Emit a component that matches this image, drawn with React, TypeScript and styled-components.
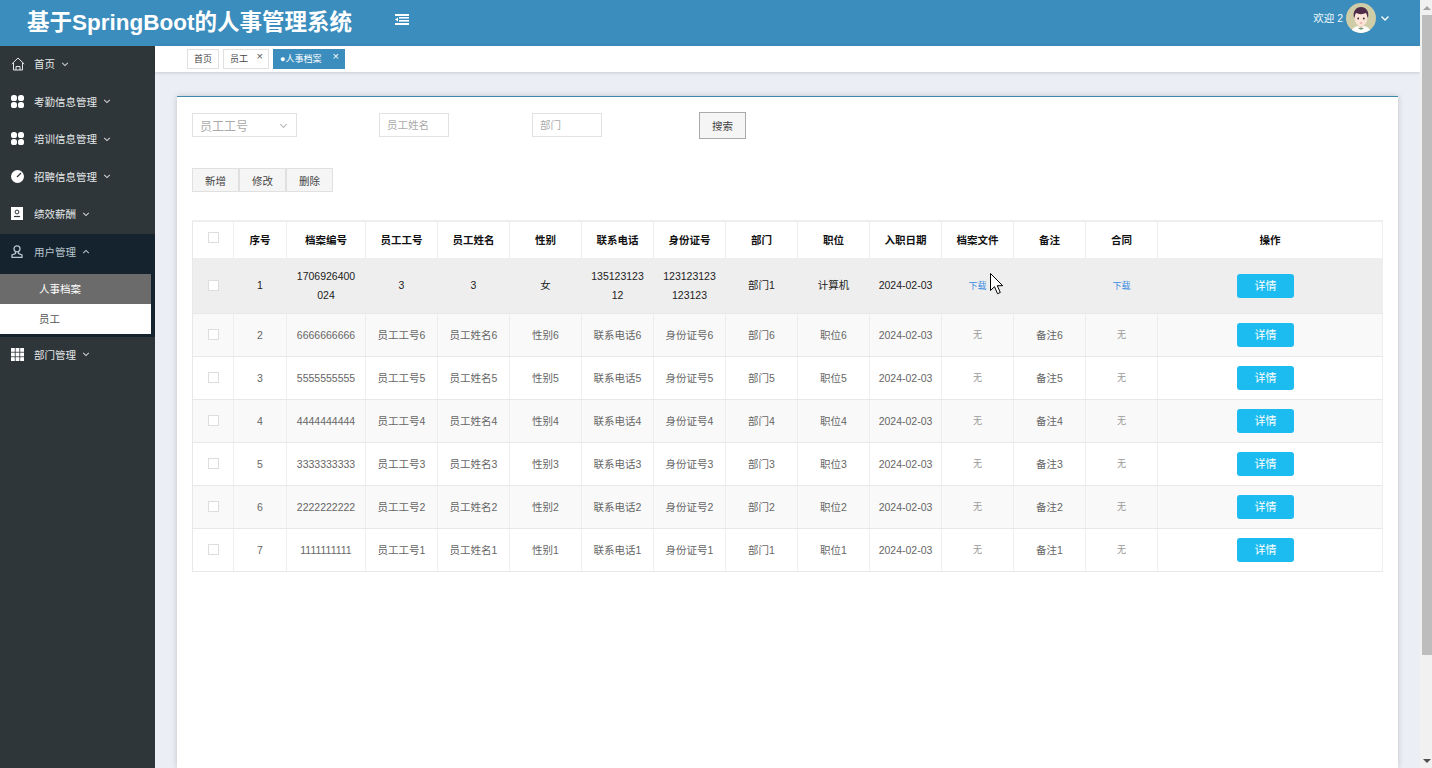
import React from "react";
import styled, { createGlobalStyle } from "styled-components";

const Global = createGlobalStyle`
  html, body { margin: 0; padding: 0; height: 100%; overflow: hidden; background: #fff; }
  body { font-family: "Liberation Sans", "Noto Sans CJK SC", sans-serif; font-size: 10.5px; color: #333; }
  #root { height: 100%; }
  * { box-sizing: border-box; }
`;

const Page = styled.div`
  position: relative;
  display: flex;
  width: 1432px;
  height: 768px;
  overflow: hidden;
`;
const Main = styled.div`
  width: 1420px;
  height: 768px;
  display: flex;
  flex-direction: column;
`;
const Scrollbar = styled.div`
  width: 12px;
  height: 768px;
  background: #f1f1f1;
  display: flex;
  flex-direction: column;
  align-items: flex-end;
`;
const ScrollArrow = styled.div<{ $down?: boolean }>`
  width: 11px;
  height: 15px;
  flex: none;
  display: flex;
  align-items: center;
  justify-content: center;
  &::before {
    content: "";
    border-left: 4px solid transparent;
    border-right: 4px solid transparent;
    ${(p) => (p.$down ? "border-top: 4px solid #505050;" : "border-bottom: 4px solid #a3a3a3;")}
  }
`;
const ScrollThumb = styled.div`
  width: 10px;
  height: 640px;
  flex: none;
  background: #bdbdbd;
`;
const ScrollRest = styled.div`
  flex: 1;
`;

const Header = styled.header`
  height: 46px;
  flex: none;
  background: #3b8dbd;
  display: flex;
  align-items: flex-start;
  color: #fff;
`;
const Title = styled.h1`
  margin: 0 0 0 27px;
  width: 368px;
  font-size: 22.5px;
  line-height: 46px;
  font-weight: 700;
  color: #fff;
  white-space: nowrap;
`;
const MenuToggle = styled.div`
  margin-top: 14px;
  display: flex;
`;
const UserBox = styled.div`
  margin-left: auto;
  margin-right: 30px;
  margin-top: 3px;
  display: flex;
  align-items: center;
  font-size: 10.5px;
`;
const Welcome = styled.span`
  margin-right: 3px;
  padding-bottom: 2px;
  color: #f2fbff;
`;
const CaretRight = styled.span`
  display: flex;
  margin-left: 4px;
`;

const Body = styled.div`
  flex: 1;
  display: flex;
  min-height: 0;
`;
const Sidebar = styled.nav`
  width: 155px;
  flex: none;
  background: #2f3639;
`;
const MenuItem = styled.div<{ $open?: boolean }>`
  height: ${(p) => (p.$open ? "40px" : "37.5px")};
  padding-bottom: ${(p) => (p.$open ? "4px" : "2px")};
  padding-left: 11px;
  display: flex;
  align-items: center;
  color: ${(p) => (p.$open ? "#b8c7ce" : "#e4e8ea")};
  background: ${(p) => (p.$open ? "#15232f" : "transparent")};
`;
const MenuIcon = styled.span`
  width: 23px;
  flex: none;
  display: flex;
`;
const MenuCaret = styled.span`
  margin-left: 6px;
  display: flex;
`;
const SubMenu = styled.div`
  background: #15232f;
  padding: 0 4px 3px 0;
`;
const SubItem = styled.div<{ $active?: boolean }>`
  height: 30px;
  padding-left: 39px;
  display: flex;
  align-items: center;
  background: ${(p) => (p.$active ? "#6b6b6b" : "#fff")};
  color: ${(p) => (p.$active ? "#fff" : "#555")};
`;

const Content = styled.div`
  flex: 1;
  min-width: 0;
  background: #ebeef4;
  display: flex;
  flex-direction: column;
`;
const TabBar = styled.div`
  height: 26px;
  flex: none;
  background: #fff;
  box-shadow: 0 1px 3px rgba(0, 0, 0, 0.15);
  padding: 3px 0 0 32px;
  display: flex;
  align-items: flex-start;
  gap: 4px;
`;
const Tab = styled.div<{ $active?: boolean; $w: number }>`
  position: relative;
  height: 20px;
  width: ${(p) => p.$w}px;
  padding-left: 6px;
  border: 1px solid ${(p) => (p.$active ? "#3b8dbd" : "#e0e0e0")};
  background: ${(p) => (p.$active ? "#3b8dbd" : "#fff")};
  color: ${(p) => (p.$active ? "#fff" : "#444")};
  font-size: 9px;
  line-height: 18px;
  white-space: nowrap;
`;
const TabClose = styled.span<{ $active?: boolean }>`
  position: absolute;
  right: 5px;
  top: -2px;
  font-size: 11px;
  line-height: 16px;
  color: ${(p) => (p.$active ? "#fff" : "#555")};
`;
const Panel = styled.section`
  flex: 1;
  margin: 24px 22px 0 22px;
  background: #fff;
  border-top: 1px solid #3f87a6;
  box-shadow: 0 0 6px rgba(0, 0, 0, 0.18);
  padding: 14px 15px 0 15px;
`;
const FilterRow = styled.div`
  display: flex;
  align-items: center;
  height: 28px;
`;
const SelectBox = styled.div`
  width: 105px;
  height: 24px;
  border: 1px solid #e2e2e2;
  padding: 0 8px 0 7px;
  color: #aaa;
  font-size: 12px;
  display: flex;
  align-items: center;
  justify-content: space-between;
`;
const TextInput = styled.input<{ $left: number }>`
  width: 70px;
  height: 24px;
  margin-left: ${(p) => p.$left}px;
  border: 1px solid #e2e2e2;
  padding: 0 7px;
  font: 10.5px "Liberation Sans", "Noto Sans CJK SC", sans-serif;
  outline: none;
  &::placeholder { color: #aaa; opacity: 1; }
`;
const SearchButton = styled.button`
  width: 47px;
  height: 27px;
  margin-left: 97px;
  background: #f5f5f5;
  border: 1px solid #aaa;
  color: #444;
  padding: 0;
  font: 10.5px "Liberation Sans", "Noto Sans CJK SC", sans-serif;
`;
const ActionRow = styled.div`
  display: flex;
  margin-top: 29px;
`;
const ActionButton = styled.button`
  width: 47px;
  height: 24px;
  background: #f5f5f5;
  border: 1px solid #e0e0e0;
  color: #444;
  padding: 0;
  font: 10.5px "Liberation Sans", "Noto Sans CJK SC", sans-serif;
`;
const Table = styled.table`
  width: 1191px;
  margin-top: 28px;
  table-layout: fixed;
  border-collapse: collapse;
  border-top: 2px solid #eee;
  border-left: 1px solid #e8e8e8;
`;
const HeadCell = styled.th`
  height: 37px;
  padding: 0 5px 1px;
  border-right: 1px solid #eee;
  border-bottom: 0;
  color: #111;
  font-size: 10.5px;
  font-weight: 700;
  text-align: center;
`;
const Row = styled.tr<{ $tone: "hover" | "even" | "odd"; $h: number }>`
  height: ${(p) => p.$h}px;
  background: ${(p) => (p.$tone === "hover" ? "#eeeeee" : p.$tone === "even" ? "#f9f9f9" : "#fff")};
  color: ${(p) => (p.$tone === "hover" ? "#222" : "#666")};
`;
const Cell = styled.td`
  padding: 1px 8px 0;
  border-right: 1px solid #eee;
  border-bottom: 1px solid #e8e8e8;
  text-align: center;
  font-size: 10.5px;
  line-height: 19px;
  word-break: break-all;
`;
const Check = styled.span<{ $up?: boolean }>`
  display: inline-block;
  width: 11px;
  height: 11px;
  background: #fff;
  border: 1px solid #ddd;
  vertical-align: middle;
  margin-bottom: ${(p) => (p.$up ? "4px" : "2px")};
`;
const Link = styled.span`
  color: #3d8fe0;
  font-size: 9px;
`;
const None = styled.span`
  color: #999;
  font-size: 9px;
`;
const DetailButton = styled.button`
  width: 57px;
  height: 24px;
  margin-right: 9px;
  background: #1cbbf0;
  border: 0;
  border-radius: 3px;
  color: #fff;
  padding: 0 0 2px;
  font: 11px "Liberation Sans", "Noto Sans CJK SC", sans-serif;
`;
const Cursor = styled.svg`
  position: absolute;
  left: 990px;
  top: 273px;
`;

const Chevron = ({ up, color = "#d0d5d8", size = 8 }: { up?: boolean; color?: string; size?: number }) => (
  <svg width={size} height={size} viewBox="0 0 10 10" fill="none" stroke={color} strokeWidth="1.3">
    <path d={up ? "M1.5 6.5 5 3l3.5 3.5" : "M1.5 3.5 5 7l3.5-3.5"} />
  </svg>
);

const HomeIcon = () => (
  <svg width="14" height="14" viewBox="0 0 14 14" fill="none" stroke="#e4e8ea" strokeWidth="1">
    <path d="M.8 7 7 1l6.2 6M2.5 6v7h9V6M5 13V9.5h4V13" />
  </svg>
);
const BlobsIcon = () => (
  <svg width="13" height="13" viewBox="0 0 13 13" fill="#fff">
    <rect x="0" y="0" width="6" height="6" rx="2.6" />
    <rect x="7" y="0" width="6" height="6" rx="2.6" />
    <rect x="0" y="7" width="6" height="6" rx="2.6" />
    <rect x="7" y="7" width="6" height="6" rx="2.6" />
  </svg>
);
const GaugeIcon = () => (
  <svg width="13" height="13" viewBox="0 0 13 13">
    <circle cx="6.5" cy="6.5" r="6.5" fill="#fff" />
    <path d="M6 7 10 3" stroke="#2f3639" strokeWidth="1.3" />
  </svg>
);
const ContactIcon = () => (
  <svg width="12" height="13" viewBox="0 0 12 13">
    <rect width="12" height="13" fill="#fff" />
    <circle cx="6" cy="5" r="1.9" fill="none" stroke="#2f3639" />
    <path d="M3 9.5h6" stroke="#2f3639" strokeWidth="1.2" />
  </svg>
);
const UserIcon = () => (
  <svg width="12" height="13" viewBox="0 0 12 13" fill="none" stroke="#b8c7ce" strokeWidth="1.3">
    <circle cx="6" cy="3.8" r="3" />
    <path d="M4.5 7v1.6L1 10v2.3h10V10L7.5 8.6V7" />
  </svg>
);
const GridIcon = () => (
  <svg width="13" height="13" viewBox="0 0 13 13" fill="#fff">
    {[0, 4.6, 9.2].flatMap((y) =>
      [0, 4.6, 9.2].map((x) => <rect key={`${x}-${y}`} x={x} y={y} width="3.8" height="3.8" />)
    )}
  </svg>
);
const MenuFold = () => (
  <svg width="14" height="11" viewBox="0 0 14 11" fill="#fff">
    <rect x="0" y="0" width="14" height="2" />
    <rect x="4" y="3" width="10" height="1.6" />
    <rect x="4" y="6" width="10" height="1.6" />
    <rect x="0" y="9" width="14" height="2" />
    <path d="M3 3.5v4L0 5.5z" />
  </svg>
);
const Avatar = () => (
  <svg width="30" height="30" viewBox="0 0 30 30">
    <defs>
      <clipPath id="avatar-clip"><circle cx="15" cy="15" r="15" /></clipPath>
    </defs>
    <g clipPath="url(#avatar-clip)">
      <rect width="30" height="30" fill="#cfcca8" />
      <path d="M5 31c0-6 4-8 10-8s10 2 10 8z" fill="#fdfdfb" />
      <path d="M12.5 22h5v2l-2.5 2-2.5-2z" fill="#f6d9c9" />
      <path d="M12 25.5l3-1 3 1-3 1.2z" fill="#6d9a7c" />
      <ellipse cx="15" cy="15" rx="6.5" ry="8" fill="#fbe4d7" />
      <path d="M8 15c-1.5-7 2-11 7-11 5 0 8.500 4 7 11-1-1-1-4-2-5-3 1.500-7 1.500-10 0-1 1-1 4-2 5z" fill="#4e2b49" />
      <circle cx="12.200" cy="15.500" r=".9" fill="#3a2638" />
      <circle cx="17.800" cy="15.500" r=".9" fill="#3a2638" />
      <path d="M13.800 20h2.400" stroke="#d77f7f" strokeWidth=".8" />
    </g>
  </svg>
);

const widths = [41, 53, 79, 72, 72, 72, 72, 72, 72, 72, 72, 72, 72, 72, 225];
const heads = ["序号", "档案编号", "员工工号", "员工姓名", "性别", "联系电话", "身份证号", "部门", "职位", "入职日期", "档案文件", "备注", "合同", "操作"];
const rows = [6, 5, 4, 3, 2, 1];

const menu = [
  { label: "考勤信息管理", icon: <BlobsIcon /> },
  { label: "培训信息管理", icon: <BlobsIcon /> },
  { label: "招聘信息管理", icon: <GaugeIcon /> },
  { label: "绩效薪酬", icon: <ContactIcon /> },
];

export default function App() {
  return (
    <Page>
      <Global />
      <Main>
        <Header>
          <Title>基于SpringBoot的人事管理系统</Title>
          <MenuToggle><MenuFold /></MenuToggle>
          <UserBox>
            <Welcome>欢迎 2</Welcome>
            <Avatar />
            <CaretRight><Chevron color="#fff" size={10} /></CaretRight>
          </UserBox>
        </Header>
        <Body>
          <Sidebar>
            <MenuItem>
              <MenuIcon><HomeIcon /></MenuIcon>首页<MenuCaret><Chevron /></MenuCaret>
            </MenuItem>
            {menu.map((m) => (
              <MenuItem key={m.label}>
                <MenuIcon>{m.icon}</MenuIcon>{m.label}<MenuCaret><Chevron /></MenuCaret>
              </MenuItem>
            ))}
            <MenuItem $open>
              <MenuIcon><UserIcon /></MenuIcon>用户管理<MenuCaret><Chevron up color="#b8c7ce" /></MenuCaret>
            </MenuItem>
            <SubMenu>
              <SubItem $active>人事档案</SubItem>
              <SubItem>员工</SubItem>
            </SubMenu>
            <MenuItem>
              <MenuIcon><GridIcon /></MenuIcon>部门管理<MenuCaret><Chevron /></MenuCaret>
            </MenuItem>
          </Sidebar>
          <Content>
            <TabBar>
              <Tab $w={32}>首页</Tab>
              <Tab $w={46}>员工<TabClose>×</TabClose></Tab>
              <Tab $w={72} $active>●人事档案<TabClose $active>×</TabClose></Tab>
            </TabBar>
            <Panel>
              <FilterRow>
                <SelectBox>员工工号<Chevron color="#bbb" size={9} /></SelectBox>
                <TextInput $left={82} placeholder="员工姓名" />
                <TextInput $left={83} placeholder="部门" />
                <SearchButton>搜索</SearchButton>
              </FilterRow>
              <ActionRow>
                <ActionButton>新增</ActionButton>
                <ActionButton>修改</ActionButton>
                <ActionButton>删除</ActionButton>
              </ActionRow>
              <Table>
                <colgroup>
                  {widths.map((w, i) => <col key={i} style={{ width: w }} />)}
                </colgroup>
                <thead>
                  <tr>
                    <HeadCell><Check $up /></HeadCell>
                    {heads.map((h) => <HeadCell key={h}>{h}</HeadCell>)}
                  </tr>
                </thead>
                <tbody>
                  <Row $tone="hover" $h={55}>
                    <Cell><Check /></Cell>
                    <Cell>1</Cell>
                    <Cell>1706926400024</Cell>
                    <Cell>3</Cell>
                    <Cell>3</Cell>
                    <Cell>女</Cell>
                    <Cell>13512312312</Cell>
                    <Cell>123123123123123</Cell>
                    <Cell>部门1</Cell>
                    <Cell>计算机</Cell>
                    <Cell>2024-02-03</Cell>
                    <Cell><Link>下载</Link></Cell>
                    <Cell></Cell>
                    <Cell><Link>下载</Link></Cell>
                    <Cell><DetailButton>详情</DetailButton></Cell>
                  </Row>
                  {rows.map((n, i) => (
                    <Row key={n} $tone={i % 2 === 0 ? "even" : "odd"} $h={43}>
                      <Cell><Check /></Cell>
                      <Cell>{i + 2}</Cell>
                      <Cell>{String(n).repeat(10)}</Cell>
                      <Cell>员工工号{n}</Cell>
                      <Cell>员工姓名{n}</Cell>
                      <Cell>性别{n}</Cell>
                      <Cell>联系电话{n}</Cell>
                      <Cell>身份证号{n}</Cell>
                      <Cell>部门{n}</Cell>
                      <Cell>职位{n}</Cell>
                      <Cell>2024-02-03</Cell>
                      <Cell><None>无</None></Cell>
                      <Cell>备注{n}</Cell>
                      <Cell><None>无</None></Cell>
                      <Cell><DetailButton>详情</DetailButton></Cell>
                    </Row>
                  ))}
                </tbody>
              </Table>
            </Panel>
          </Content>
        </Body>
      </Main>
      <Scrollbar>
        <ScrollArrow />
        <ScrollThumb />
        <ScrollRest />
        <ScrollArrow $down />
      </Scrollbar>
      <Cursor width="13" height="22" viewBox="0 0 13 22">
        <path d="M.5.5v17l4-3.800 3 7 2.800-1.200-3-6.800h5.400z" fill="#fff" stroke="#000" strokeWidth="1" />
      </Cursor>
    </Page>
  );
}
